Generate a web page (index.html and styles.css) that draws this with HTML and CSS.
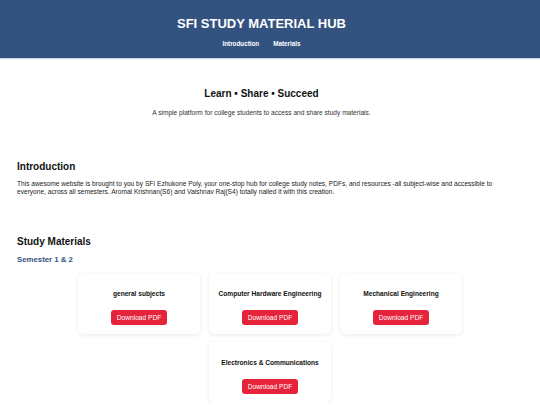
FILE: index.html
```html
<!DOCTYPE html>
<html>
<head>
<meta charset="utf-8">
<link rel="stylesheet" href="styles.css">
</head>
<body>
<header class="site-header">
  <h1 class="site-title">SFI STUDY MATERIAL HUB</h1>
  <nav class="site-nav">
    <a href="#intro">Introduction</a>
    <a href="#materials">Materials</a>
  </nav>
</header>
<section class="hero">
  <h2 class="hero-title">Learn • Share • Succeed</h2>
  <p class="hero-sub">A simple platform for college students to access and share study materials.</p>
</section>
<section class="intro" id="intro">
  <h2 class="section-title">Introduction</h2>
  <p class="intro-text">This awesome website is brought to you by SFI Ezhukone Poly, your one-stop hub for college study notes, PDFs, and resources -all subject-wise and accessible to everyone, across all semesters. Aromal Krishnan(S6) and Vaishnav Raj(S4) totally nailed it with this creation.</p>
</section>
<section class="materials" id="materials">
  <h2 class="section-title">Study Materials</h2>
  <h3 class="semester">Semester 1 &amp; 2</h3>
  <div class="cards">
    <div class="card"><h4 class="card-title">general subjects</h4><a class="btn" href="#">Download PDF</a></div>
    <div class="card"><h4 class="card-title">Computer Hardware Engineering</h4><a class="btn" href="#">Download PDF</a></div>
    <div class="card"><h4 class="card-title">Mechanical Engineering</h4><a class="btn" href="#">Download PDF</a></div>
    <div class="card"><h4 class="card-title">Electronics &amp; Communications</h4><a class="btn" href="#">Download PDF</a></div>
  </div>
</section>
</body>
</html>
```
FILE: styles.css
```css
* { box-sizing: border-box; }
html, body { margin: 0; padding: 0; background: #fff; }
body { font-family: "Liberation Sans", Arial, sans-serif; color: #222; }

.site-header {
  background: #34527f;
  height: 58px;
  text-align: center;
  color: #fff;
  padding: 15px 17px 0 0;
  box-shadow: 0 1px 1px rgba(52, 82, 127, 0.25);
}
.site-title {
  margin: 0;
  font-size: 13px;
  line-height: 18px;
  font-weight: bold;
}
.site-nav {
  margin-top: 7px;
  display: flex;
  justify-content: center;
  gap: 14px;
}
.site-nav a {
  color: #fff;
  text-decoration: none;
  font-size: 6.3px;
  font-weight: bold;
  line-height: 8px;
}

.hero { text-align: center; padding: 30px 17px 0 0; }
.hero-title {
  margin: 0;
  font-size: 10px;
  line-height: 12px;
  font-weight: bold;
  color: #111;
}
.hero-sub {
  margin: 9px 0 0;
  font-size: 6.6px;
  line-height: 8px;
  color: #333;
}

.intro, .materials { padding-left: 17px; padding-right: 17px; }
.intro { padding-top: 44px; padding-right: 34px; }
.section-title {
  margin: 0;
  font-size: 10px;
  line-height: 12px;
  font-weight: bold;
  color: #111;
}
.intro-text {
  margin: 7px 0 0;
  font-size: 6.6px;
  line-height: 8px;
  color: #222;
}
.materials { padding-top: 40px; }
.semester {
  margin: 7px 0 0;
  font-size: 7.8px;
  line-height: 9px;
  font-weight: bold;
  color: #34527f;
}
.cards {
  margin-top: 9px;
  display: flex;
  flex-wrap: wrap;
  justify-content: center;
  gap: 8px 9px;
}
.card {
  width: 122px;
  height: 61px;
  background: #fff;
  border-radius: 5px;
  box-shadow: 0 1px 4px rgba(0, 0, 0, 0.09);
  padding-top: 17px;
  display: flex;
  flex-direction: column;
  align-items: center;
}
.card-title {
  margin: 0;
  font-size: 6.6px;
  line-height: 8px;
  font-weight: bold;
  color: #111;
}
.btn {
  margin-top: 12px;
  display: inline-block;
  background: #e5233b;
  color: #fff;
  text-decoration: none;
  font-size: 6.6px;
  line-height: 15px;
  height: 15px;
  padding: 0 5.5px;
  border-radius: 3px;
}
```
